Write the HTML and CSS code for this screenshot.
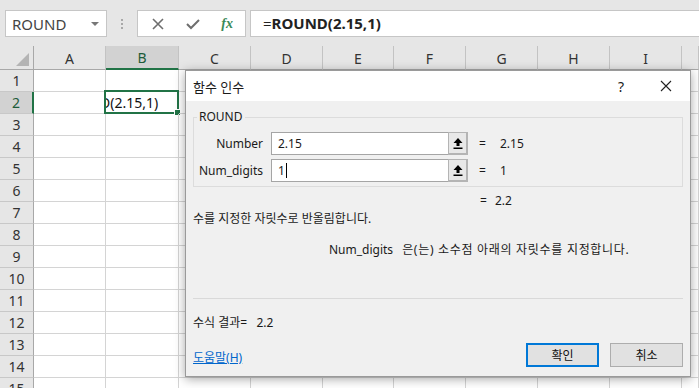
FILE: index.html
```html
<!DOCTYPE html>
<html lang="ko">
<head>
  <meta charset="UTF-8">
  <title>함수 인수 - ROUND</title>
  <link rel="stylesheet" href="styles.css">
</head>
<body>
  <div class="app">
    <div class="toolbar">
      <div class="namebox">
        <span>ROUND</span>
        <span class="caret"></span>
      </div>
      <div class="grip"><i></i><i></i><i></i></div>
      <div class="fx-buttons">
        <svg width="12" height="12" viewBox="0 0 12 12"><path d="M1 1 L11 11 M11 1 L1 11" stroke="#6e6e6e" stroke-width="1.6" fill="none"/></svg>
        <svg width="14" height="12" viewBox="0 0 14 12"><path d="M1 6 L5 10 L13 2" stroke="#6e6e6e" stroke-width="2" fill="none"/></svg>
        <span class="fx">fx</span>
      </div>
      <div class="formula">=<b>ROUND(2.15,1)</b></div>
    </div>

    <div class="sheet" id="sheet"></div>

    <!-- Function Arguments dialog -->
    <div class="dialog">
      <div class="titlebar">
        <span class="title">함수 인수</span>
        <span class="help">?</span>
        <svg class="close" width="12" height="12" viewBox="0 0 12 12"><path d="M1 1 L11 11 M11 1 L1 11" stroke="#222" stroke-width="1.1" fill="none"/></svg>
      </div>
      <div class="dialog-body">
        <fieldset class="args">
          <legend>ROUND</legend>
          <div class="arg-row">
            <label>Number</label>
            <div class="ref-input">
              <span class="value">2.15</span>
              <span class="ref-btn"><svg width="10" height="11" viewBox="0 0 10 11"><path d="M5 0 L9.5 5 L6.5 5 L6.5 8 L3.5 8 L3.5 5 L0.5 5 Z M0.5 9.5 H9.5 V11 H0.5 Z" fill="#000"/></svg></span>
            </div>
            <span class="eq">=</span>
            <span class="res">2.15</span>
          </div>
          <div class="arg-row">
            <label>Num_digits</label>
            <div class="ref-input">
              <span class="value">1<span class="cursor"></span></span>
              <span class="ref-btn"><svg width="10" height="11" viewBox="0 0 10 11"><path d="M5 0 L9.5 5 L6.5 5 L6.5 8 L3.5 8 L3.5 5 L0.5 5 Z M0.5 9.5 H9.5 V11 H0.5 Z" fill="#000"/></svg></span>
            </div>
            <span class="eq">=</span>
            <span class="res">1</span>
          </div>
        </fieldset>

        <div class="total"><span class="eq">=</span><span>2.2</span></div>
        <p class="desc">수를 지정한 자릿수로 반올림합니다.</p>
        <p class="arg-desc"><span>Num_digits</span><span class="wide">은(는) 소수점 아래의 자릿수를 지정합니다.</span></p>

        <hr class="sep">

        <p class="result">수식 결과=&nbsp;&nbsp;&nbsp;2.2</p>

        <div class="footer">
          <a href="#" class="help-link">도움말(H)</a>
          <div class="buttons">
            <button class="btn primary">확인</button>
            <button class="btn">취소</button>
          </div>
        </div>
      </div>
    </div>
  </div>

  <script>
    const sheet = document.getElementById('sheet');
    const cols = ['', 'A', 'B', 'C', 'D', 'E', 'F', 'G', 'H', 'I', ''];

    cols.forEach(function (c, i) {
      const h = document.createElement('div');
      h.className = i === 0 ? 'corner' : 'col-head';
      if (c === 'B') h.classList.add('active');
      h.textContent = c;
      sheet.appendChild(h);
    });

    for (let r = 1; r <= 15; r++) {
      for (let i = 0; i < cols.length; i++) {
        const cell = document.createElement('div');
        if (i === 0) {
          cell.className = 'row-head';
          cell.textContent = r;
          if (r === 2) cell.classList.add('active');
        } else {
          cell.className = 'cell';
          if (r === 2 && cols[i] === 'B') {
            cell.classList.add('selected');
            cell.innerHTML = '<span class="cell-text">D(2.15,1)</span>';
          }
        }
        sheet.appendChild(cell);
      }
    }
  </script>
</body>
</html>
```

FILE: styles.css
```css
body {
  margin: 0;
  background: #fff;
  font-family: "Noto Sans", "Noto Sans CJK KR", sans-serif;
  color: #222;
  overflow: hidden;
}

.app {
  position: relative;
  width: 699px;
  height: 388px;
  overflow: hidden;
}

/* Formula bar */
.toolbar {
  height: 46px;
  background: #e6e6e6;
  display: flex;
  align-items: flex-start;
  padding-top: 10px;
  box-sizing: border-box;
}

.namebox {
  margin-left: 5px;
  width: 102px;
  height: 27px;
  box-sizing: border-box;
  background: #fff;
  border: 1px solid #c6c6c6;
  display: flex;
  align-items: center;
  justify-content: space-between;
  padding: 0 7px 0 6px;
  font-size: 15px;
  color: #444;
}

.caret {
  width: 0;
  height: 0;
  border-left: 4px solid transparent;
  border-right: 4px solid transparent;
  border-top: 4px solid #777;
}

.grip {
  width: 30px;
  height: 27px;
  display: flex;
  flex-direction: column;
  align-items: center;
  justify-content: center;
  gap: 2px;
}

.grip i {
  width: 2px;
  height: 2px;
  background: #a8a8a8;
}

.fx-buttons {
  width: 109px;
  height: 27px;
  box-sizing: border-box;
  background: #fff;
  border: 1px solid #c6c6c6;
  display: flex;
  align-items: center;
  justify-content: space-between;
  padding: 0 12px 0 14px;
}

.fx {
  font-family: "Liberation Serif", serif;
  font-style: italic;
  font-weight: bold;
  font-size: 14px;
  color: #3a8a5a;
}

.formula {
  margin-left: 4px;
  flex: 1;
  height: 27px;
  box-sizing: border-box;
  background: #fff;
  border: 1px solid #c6c6c6;
  border-right: none;
  padding-left: 12px;
  font-size: 15px;
  line-height: 25px;
  color: #222;
}

/* Sheet */
.sheet {
  display: grid;
  grid-template-columns: 34px 72px 73px 72px 72px 71px 72px 72px 72px 72px 1fr;
  grid-template-rows: 24px;
  grid-auto-rows: 22px;
}

.corner,
.col-head,
.row-head {
  background: #e6e6e6;
  box-sizing: border-box;
  display: flex;
  align-items: center;
  justify-content: center;
  font-size: 14px;
  color: #333;
}

.corner {
  border-right: 1px solid #a8a8a8;
  border-bottom: 1px solid #a8a8a8;
  position: relative;
}

.corner::after {
  content: "";
  position: absolute;
  right: 4px;
  bottom: 3px;
  border-left: 13px solid transparent;
  border-bottom: 13px solid #b4b4b4;
}

.col-head {
  border-right: 1px solid #c3c3c3;
  border-bottom: 1px solid #a8a8a8;
  padding-top: 1px;
}

.col-head.active {
  background: #d2d2d2;
  color: #1e5c3a;
  border-bottom: 2px solid #217346;
}

.row-head {
  border-right: 1px solid #a8a8a8;
  border-bottom: 1px solid #c8c8c8;
}

.row-head.active {
  background: #d2d2d2;
  color: #1e5c3a;
  border-right: 2px solid #217346;
}

.cell {
  box-sizing: border-box;
  border-right: 1px solid #d4d4d4;
  border-bottom: 1px solid #d4d4d4;
  position: relative;
}

.cell.selected {
  overflow: visible;
  font-size: 14px;
  line-height: 21px;
}

.cell.selected::before {
  content: "";
  position: absolute;
  left: -2px;
  top: -2px;
  right: -1px;
  bottom: -1px;
  border: 2px solid #217346;
}

.cell.selected::after {
  content: "";
  position: absolute;
  right: -3px;
  bottom: -3px;
  width: 5px;
  height: 5px;
  background: #217346;
  border: 1px solid #fff;
}

.cell-text {
  display: block;
  overflow: hidden;
  white-space: nowrap;
  text-indent: -7px;
  padding-left: 1px;
  color: #111;
}

/* Dialog */
.dialog {
  position: absolute;
  left: 185px;
  top: 70px;
  width: 506px;
  height: 307px;
  box-sizing: border-box;
  background: #f0f0f0;
  border: 1px solid #9a9a9a;
  box-shadow: 0 2px 10px rgba(0, 0, 0, 0.35);
  font-size: 12px;
  color: #1a1a1a;
}

.titlebar {
  height: 30px;
  background: #fff;
  display: flex;
  align-items: center;
  padding-left: 7px;
  font-size: 13px;
}

.title {
  flex: 1;
}

.help {
  font-size: 14px;
  margin-right: 36px;
}

.close {
  margin-right: 18px;
}

.dialog-body {
  padding: 0 7px;
}

.args {
  margin: 8px 0 0;
  padding: 7px 0 4px;
  border: 1px solid #dcdcdc;
  display: flex;
  flex-direction: column;
  gap: 4px;
}

.args legend {
  margin-left: 3px;
  padding: 0 2px;
  line-height: 16px;
}

.arg-row {
  display: grid;
  grid-template-columns: 69px 197px 16px auto;
  column-gap: 8px;
  align-items: center;
  height: 23px;
}

.arg-row label {
  text-align: right;
}

.arg-row .eq {
  margin-left: 3px;
}

.ref-input {
  height: 23px;
  box-sizing: border-box;
  border: 1px solid #a5a5a5;
  background: #fff;
  display: flex;
  align-items: stretch;
}

.ref-input .value {
  flex: 1;
  padding-left: 6px;
  display: flex;
  align-items: center;
}

.cursor {
  display: inline-block;
  width: 1px;
  height: 15px;
  background: #000;
  margin-left: 1px;
}

.ref-btn {
  width: 20px;
  box-sizing: border-box;
  background: #e8e8e8;
  border: 2px solid #b4b4b4;
  border-top-width: 1px;
  border-left-width: 1px;
  margin: -1px -1px -1px 0;
  display: flex;
  align-items: center;
  justify-content: center;
}

.total {
  margin-top: 6px;
  padding-left: 287px;
  line-height: 16px;
  display: flex;
  gap: 8px;
}

.desc {
  margin: 2px 0 0;
  line-height: 16px;
}

.arg-desc {
  margin: 15px 0 0;
  padding-left: 136px;
  line-height: 16px;
  display: flex;
  gap: 9px;
}

.arg-desc .wide {
  letter-spacing: 0.7px;
}

.sep {
  margin: 40px 0 0;
  border: none;
  border-top: 1px solid #d9d9d9;
}

.result {
  margin: 16px 0 0;
  line-height: 16px;
}

.footer {
  margin-top: 12px;
  display: flex;
  align-items: center;
  justify-content: space-between;
}

.help-link {
  color: #0066cc;
  text-decoration: underline;
  margin-top: 3px;
}

.buttons {
  display: flex;
  gap: 11px;
}

.btn {
  width: 73px;
  height: 24px;
  box-sizing: border-box;
  font-family: inherit;
  font-size: 12px;
  color: #111;
  background: #e1e1e1;
  border: 1px solid #adadad;
  padding: 0;
}

.btn.primary {
  border: 2px solid #0078d7;
}
```
